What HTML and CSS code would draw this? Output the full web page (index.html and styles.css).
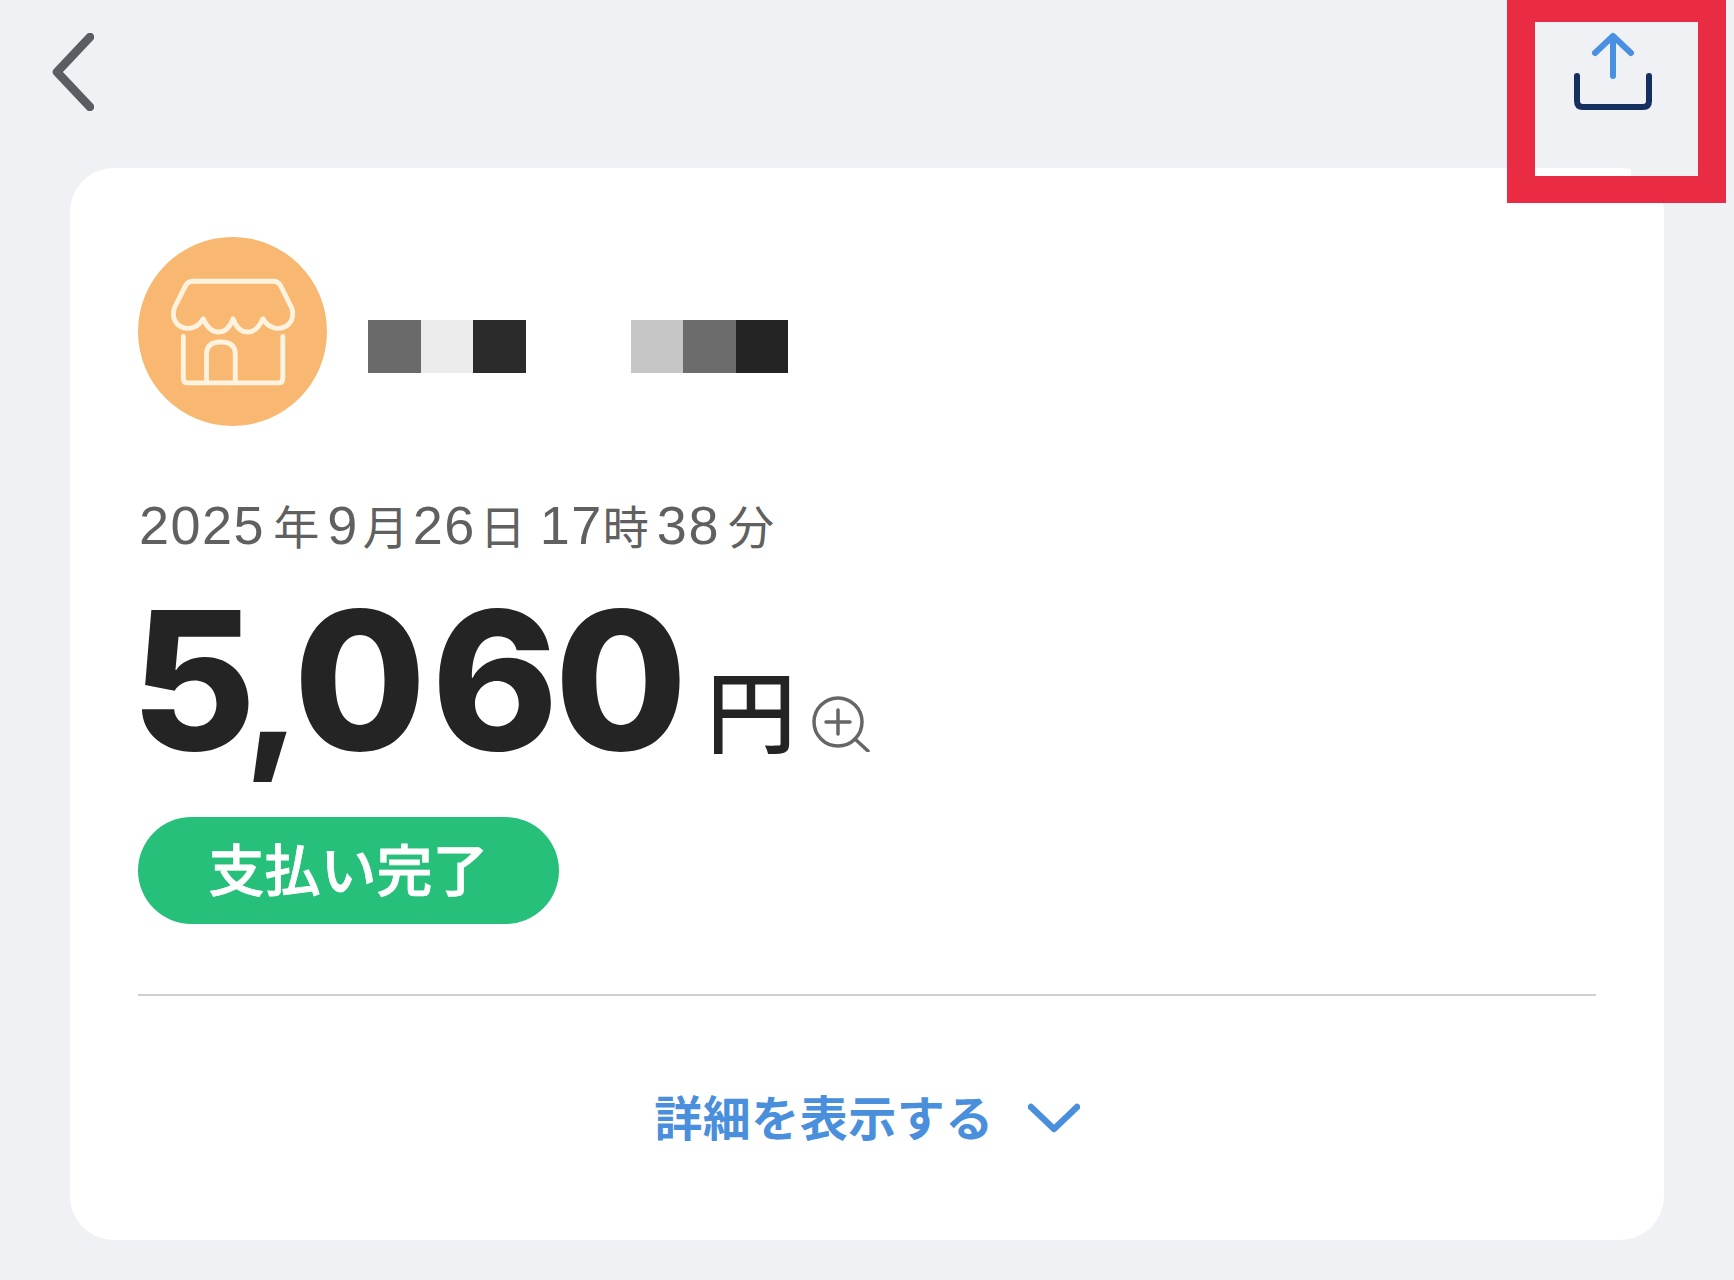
FILE: index.html
```html
<!DOCTYPE html>
<html lang="ja">
<head>
<meta charset="utf-8">
<title>支払い完了</title>
<link rel="stylesheet" href="styles.css">
</head>
<body>
<div class="page">
  <header class="topbar">
    <svg class="back" viewBox="0 0 42 78" aria-label="戻る"><path d="M38 4 L5 39 L38 74"/></svg>
    <div class="share">
      <svg class="share-icon" viewBox="0 0 80 80" aria-label="共有">
        <path class="share-arrow" d="M36 43 V3 M18 20 L36 3 L54 20"/>
        <path class="share-tray" d="M0 43 V68 Q0 74 6 74 H66 Q72 74 72 68 V43"/>
      </svg>
    </div>
  </header>
  <div class="highlight"></div>
  <main class="card">
    <section class="merchant">
      <div class="avatar">
        <svg viewBox="0 0 171 171">
          <path d="M50 40 H122 Q127 40 129 44 L139 64 C145 82 122 90 113 74 C106 90 92 90 86 74 C80 90 66 90 59 74 C50 90 27 82 33 64 L43 44 Q45 40 50 40 Z"/>
          <path d="M41 90 V128 Q41 132 45 132 H127 Q131 132 131 128 V90"/>
          <path d="M62 132 V106 Q62 95 75 95 Q88 95 88 106 V132"/>
        </svg>
      </div>
      <div class="mosaic" aria-label="店舗名（モザイク）">
        <div class="pixels">
          <span class="px px-a"></span><span class="px px-b"></span><span class="px px-c"></span>
        </div>
        <div class="pixels">
          <span class="px px-d"></span><span class="px px-e"></span><span class="px px-f"></span>
        </div>
      </div>
    </section>
    <p class="date">2025<span class="u">年</span>9<span class="v">月</span>26<span class="v">日</span><span class="gap">17</span><span class="t">時</span>38<span class="u">分</span></p>
    <div class="amount">
      <span class="value">5<span class="comma">,</span><span class="d0">0</span>60</span>
      <span class="yen">円</span>
      <svg class="zoom" viewBox="0 0 58 56" aria-label="拡大">
        <circle cx="26" cy="26" r="24"/>
        <path d="M26 14 V38 M14 26 H38 M43 43 L56 55"/>
      </svg>
    </div>
    <div class="status">支払い完了</div>
    <hr class="divider">
    <div class="details">
      <span>詳細を表示する</span>
      <svg class="chevron" viewBox="0 0 52 30"><path d="M3 4 L26 26 L49 4"/></svg>
    </div>
  </main>
</div>
</body>
</html>
```
FILE: styles.css
```css
* { box-sizing: border-box; }
html, body { margin: 0; padding: 0; }
body {
  width: 1734px;
  height: 1280px;
  overflow: hidden;
  background: #eff1f5;
  font-family: "Liberation Sans", "Noto Sans CJK JP", sans-serif;
}
.page { position: relative; height: 1280px; }
.topbar {
  height: 168px;
  display: flex;
  justify-content: space-between;
  align-items: flex-start;
  padding: 33px 77px 0 52px;
}
.back { width: 42px; height: 78px; display: block; }
.back path { fill: none; stroke: #5a5d61; stroke-width: 8.5; stroke-linecap: round; stroke-linejoin: round; }
.share { position: relative; z-index: 3; }
.share-icon { width: 80px; height: 80px; display: block; overflow: visible; }
.share-icon path { fill: none; stroke-width: 6; stroke-linecap: round; stroke-linejoin: round; }
.share-arrow { stroke: #4a90e2; }
.share-tray { stroke: #14305f; }
.highlight {
  position: absolute;
  z-index: 2;
  left: 1507px;
  top: -6px;
  width: 219px;
  height: 209px;
  border: 28px solid #e92c44;
  border-bottom-width: 27px;
}
.highlight::after {
  content: "";
  position: absolute;
  right: 0;
  bottom: 0;
  width: 67px;
  height: 8px;
  background: #eff1f5;
}
.card {
  margin: 0 70px;
  height: 1072px;
  background: #fff;
  border-radius: 44px;
  padding: 69px 68px 0;
}
.merchant { display: flex; align-items: flex-start; gap: 41px; }
.avatar {
  width: 189px;
  height: 189px;
  border-radius: 50%;
  background: #f8b871;
  flex: none;
}
.avatar svg { width: 189px; height: 189px; display: block; }
.avatar path { fill: none; stroke: #fff3df; stroke-width: 4.4; stroke-linejoin: round; stroke-linecap: round; }
.mosaic { display: flex; gap: 105px; margin-top: 83px; }
.pixels { display: flex; }
.px { width: 52.5px; height: 53px; display: block; }
.px-a { background: #6a6a6a; }
.px-b { background: #ebebeb; }
.px-c { background: #2b2b2b; }
.px-d { background: #c6c6c6; }
.px-e { background: #6c6c6c; }
.px-f { background: #232323; }
.date {
  margin: 69px 0 0 1px;
  height: 61px;
  font-size: 54px;
  line-height: 60px;
  letter-spacing: 1.5px;
  color: #606060;
  white-space: nowrap;
}
.date .u { font-size: 46px; margin: 0 8px; letter-spacing: 0; }
.date .v { font-size: 46px; margin: 0 4px; letter-spacing: 0; }
.date .t { font-size: 46px; margin: 0 8px 0 0; letter-spacing: 0; }
.date .gap { margin-left: 10px; }
.amount {
  display: flex;
  align-items: flex-end;
  margin: 38px 0 0 -7px;
  height: 183px;
  color: #242424;
}
.value { font-family: "Inter", "Liberation Sans", sans-serif; font-size: 192px; line-height: 170px; font-weight: 800; letter-spacing: -4px; }
.comma { font-size: 160px; margin: 0 -3px 0 -8px; }
.d0 { margin-right: 9px; }
.yen { font-size: 90px; line-height: 100px; font-weight: 500; margin: 0 0 20px 23px; font-family: "Noto Sans CJK JP", sans-serif; }
.zoom { width: 58px; height: 56px; margin: 0 0 25px 16px; }
.zoom circle, .zoom path { fill: none; stroke: #666; stroke-width: 3.5; stroke-linecap: round; }
.status {
  margin-top: 40px;
  width: 421px;
  height: 107px;
  border-radius: 54px;
  background: #26c07a;
  color: #fff;
  display: flex;
  align-items: center;
  justify-content: center;
  padding-bottom: 8px;
  font-family: "Noto Sans CJK JP", sans-serif;
  font-size: 56px;
  font-weight: 500;
  -webkit-text-stroke: 0.8px #fff;
}
.divider {
  margin: 70px 0 0;
  border: 0;
  height: 2px;
  background: #cfcfcf;
}
.details {
  margin-top: 89px;
  display: flex;
  justify-content: center;
  align-items: center;
  gap: 34px;
  color: #4a8fdc;
  font-family: "Noto Sans CJK JP", sans-serif;
  font-size: 48px;
  font-weight: 700;
  letter-spacing: 0.5px;
  line-height: 60px;
}
.chevron { width: 52px; height: 30px; margin-top: 6px; }
.chevron path { fill: none; stroke: #4a8fdc; stroke-width: 6.5; stroke-linecap: round; stroke-linejoin: round; }
```
